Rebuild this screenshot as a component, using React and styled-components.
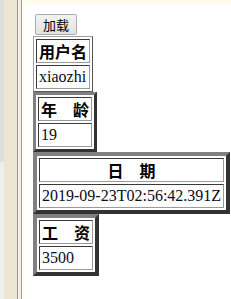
import React from 'react'
import styled, { createGlobalStyle } from 'styled-components'

const GlobalStyle = createGlobalStyle`
  html, body {
    margin: 0;
    padding: 0;
    background: #ffffff;
  }
  body {
    font-family: "Liberation Serif", "Noto Sans CJK SC", serif;
  }
`

const Page = styled.div`
  display: flex;
  width: 231px;
  height: 299px;
  overflow: hidden;
`

const Track = styled.div`
  width: 4px;
  background: #efefef;
  display: flex;
  flex-direction: column;
`

const Thumb = styled.div`
  height: 162px;
  background: #dedede;
`

const Beige = styled.div`
  width: 13px;
  background: #ede6d5;
`

const Rule = styled.div`
  width: 1px;
  background: #9c9a96;
`

const Gap = styled.div`
  width: 3px;
  background: #f4efe2;
`

const CreamEdge = styled.div`
  width: 3px;
  background: #fffcef;
`

const Main = styled.div`
  flex: 1;
  display: flex;
  flex-direction: column;
`

const TopBand = styled.div`
  height: 3px;
  background: #fffbea;
`

const Content = styled.div`
  padding: 9px 0 0 8px;
  display: flex;
  flex-direction: column;
  align-items: flex-start;
`

const Button = styled.button`
  margin: 2px 0 1px 2px;
  height: 21px;
  width: 42px;
  padding: 0;
  font-family: "Noto Sans CJK SC", sans-serif;
  font-size: 13px;
  line-height: 19px;
  color: #000;
  background: linear-gradient(#f2f2f2, #e3e3e3);
  border: 1px solid #acacac;
  border-radius: 2px;
`

const Table = styled.table`
  border-collapse: separate;
  border-spacing: 2px;
  border-style: solid;
  border-width: ${p => p.$border}px;
  border-color: ${p => p.$border > 1
    ? '#808080 #333333 #333333 #808080'
    : '#a0a0a0 #555555 #555555 #a0a0a0'};
  background: #fff;
`

const Th = styled.th`
  padding: 1px 2px;
  height: 20px;
  line-height: 20px;
  font-family: "Noto Sans CJK SC", sans-serif;
  font-weight: bold;
  font-size: 16px;
  color: #000;
  text-align: center;
  white-space: nowrap;
  border: 1px solid;
  border-color: #3a3a3a #9a9a9a #9a9a9a #3a3a3a;
`

const Td = styled.td`
  padding: 1px 2px;
  height: 20px;
  line-height: 20px;
  font-family: "Liberation Serif", serif;
  font-size: 16px;
  color: #0a0a20;
  text-align: left;
  white-space: nowrap;
  border: 1px solid;
  border-color: #3a3a3a #9a9a9a #9a9a9a #3a3a3a;
`

const fields = [
  { label: '用户名', value: 'xiaozhi', border: 1 },
  { label: '年\u3000龄', value: '19', border: 3 },
  { label: '日\u3000期', value: '2019-09-23T02:56:42.391Z', border: 4 },
  { label: '工\u3000资', value: '3500', border: 4 },
]

const Field = ({ label, value, border }) => (
  <Table $border={border}>
    <tbody>
      <tr><Th>{label}</Th></tr>
      <tr><Td>{value}</Td></tr>
    </tbody>
  </Table>
)

const App = () => {
  return (
    <Page>
      <GlobalStyle />
      <Track><Thumb /></Track>
      <Beige />
      <Rule />
      <Gap />
      <Rule />
      <CreamEdge />
      <Main>
        <TopBand />
        <Content>
          <Button>加载</Button>
          {fields.map(f => <Field key={f.label} {...f} />)}
        </Content>
      </Main>
    </Page>
  )
}

export default App
